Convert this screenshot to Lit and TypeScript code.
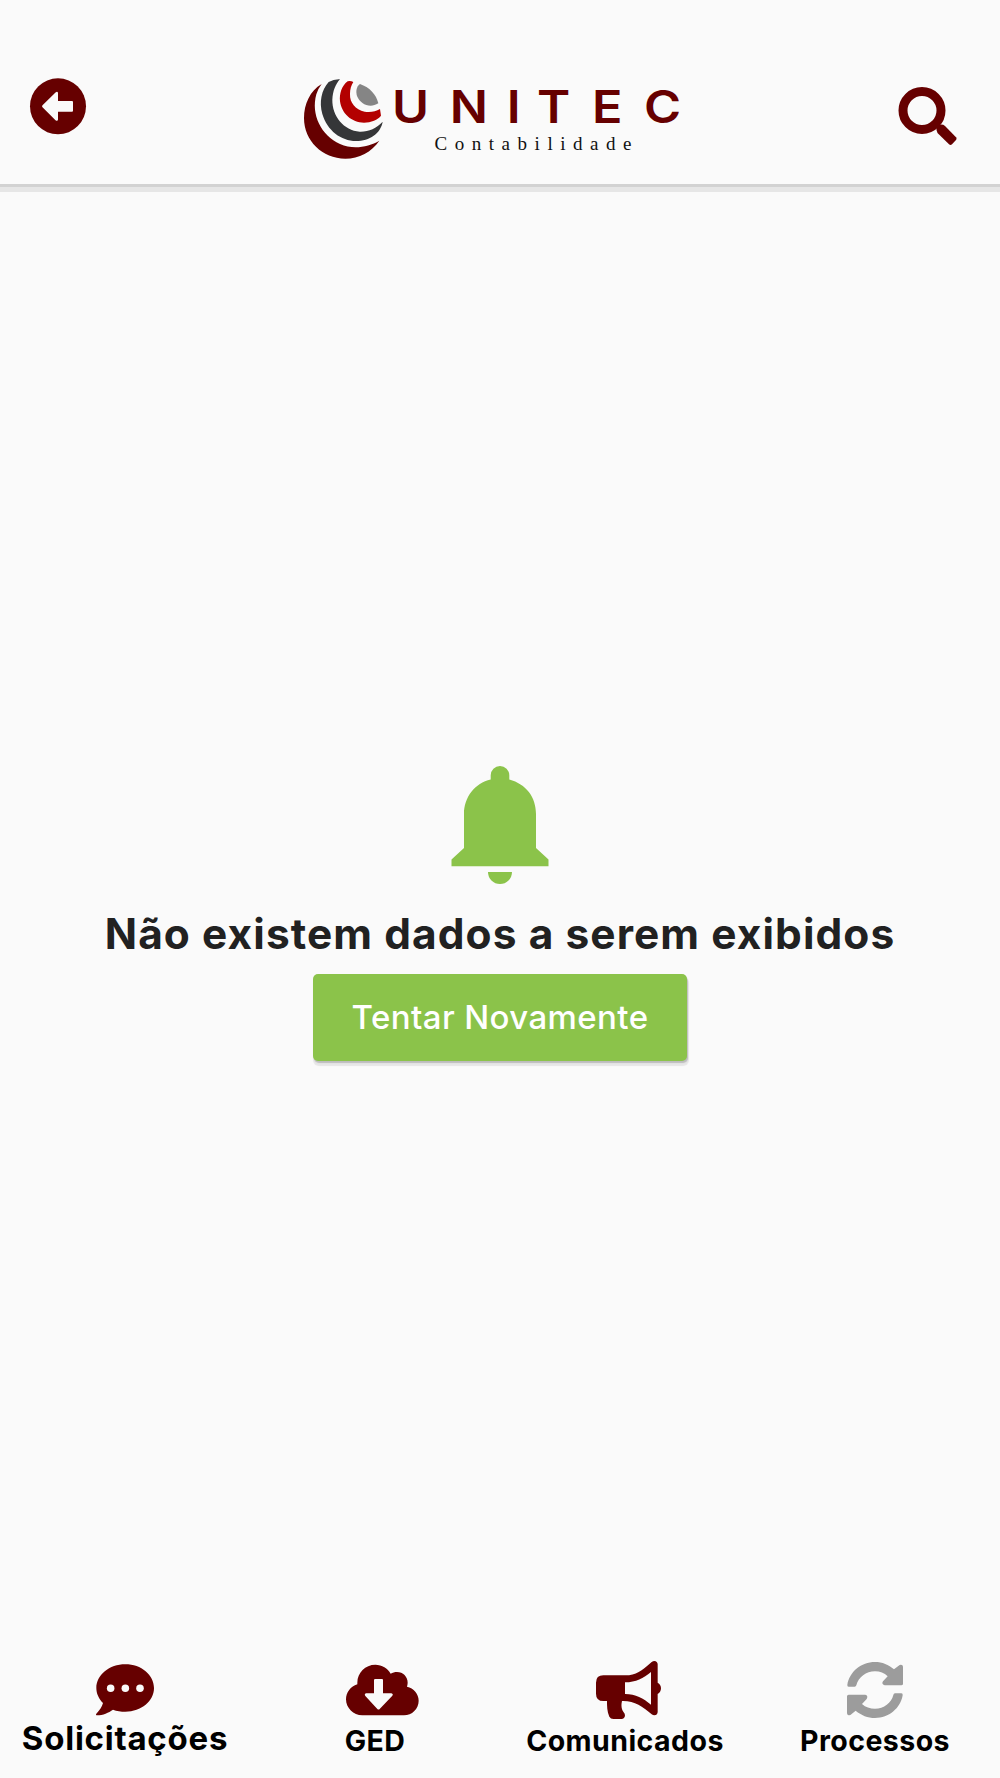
import { LitElement, html, css, svg } from "lit";
import { customElement } from "lit/decorators.js";

const chat = svg`
  <path fill="#600" fill-rule="evenodd" d="M376 73C424 73 462 105 462 144S424 215 376 215C363 215 350 213 339 209C326 218 309 226 291 226C288 226 287 223 289 221C299 211 306 200 309 189C297 177 289 161 289 144C289 105 328 73 376 73Z"/>
  <g fill="#fafafa"><circle cx="332" cy="145" r="11.3"/><circle cx="376" cy="145" r="11.3"/><circle cx="420" cy="145" r="11.3"/></g>`;

const cloud = svg`
  <path fill="#600" d="M187 226C160 226 138 204 138 178C138 157 152 139 172 133V128C172 98 196 74 226 74C246 74 263 85 272 101C278 98 284 96 291 96C309 96 323 110 323 128C323 132 322 136 321 140C341 144 356 162 356 182C356 206 336 226 312 226Z"/>
  <path fill="#fafafa" d="M226 117H246Q249 117 249 120V160H274Q281 162 277 167L239 207Q236 210 232 207L196 168Q192 162 198 160H222V120Q222 117 226 117Z"/>`;

const horn = svg`
  <path fill="#600" fill-rule="evenodd" d="M310 106H375C410 106 423 93 455 66C464 59 473 65 473 73V128C479 131 483 137 483 145S479 159 473 162V216C473 225 463 229 455 223C427 199 404 182 366 183C363 196 364 207 371 217C379 226 374 237 364 237H340Q332 237 328 230C321 215 321 198 321 183H310Q288 183 288 161V128Q288 106 310 106ZM375 127V162C407 162 430 175 453 194V96C430 114 408 127 375 127Z"/>`;

const sync = svg`
  <g fill="#9c9c9c">
    <path d="M236 140Q231 140 232 134C239 95 273 66 315 66C337 66 356 74 372 88L386 77Q390 73 396 75Q399 77 399 81V131Q399 136 394 136H344Q338 135 337 130Q337 127 339 124L353 109C343 99 330 94 315 94C288 94 266 111 259 136Q258 140 254 140Z"/>
    <path d="M394 160Q399 160 398 166C391 205 357 234 315 234C293 234 274 226 257 212L244 223Q240 227 234 225Q231 223 231 219V169Q231 164 236 164H286Q292 165 292 170Q292 173 290 177L276 192C287 202 300 206 315 206C342 206 364 189 370 165Q371 160 375 160Z"/>
  </g>`;

const items = [
  { label: "Solicitações", kind: "first", box: "0 60 750 180", icon: chat },
  { label: "GED", kind: "ged", box: "-150 60 750 180", icon: cloud },
  { label: "Comunicados", kind: "com", box: "0 60 750 180", icon: horn },
  { label: "Processos", kind: "proc", box: "-60 60 750 180", icon: sync },
];

@customElement("app-root")
export class AppRoot extends LitElement {
  static styles = css`
    :host {
      display: flex;
      flex-direction: column;
      height: 1778px;
      background: #fafafa;
      font-family: Inter, "Liberation Sans", sans-serif;
      color: #000;
    }
    svg { display: block; }
    header {
      display: flex;
      justify-content: space-between;
      align-items: flex-start;
      box-sizing: border-box;
      height: 184px;
      padding: 76px 42px 0 28px;
      flex: none;
      box-shadow: 0 3px 0 #d2d2d2, 0 8px 0 #e6e6e6;
    }
    .icon-button { border: 0; padding: 0; background: none; }
    .logo { margin-left: 4px; }
    .search { margin-top: 9px; }
    .brand { font: 600 45px Inter, sans-serif; fill: #600; }
    .sub { font: 19px "Liberation Serif", serif; fill: #111; }
    main {
      flex: 1;
      display: flex;
      flex-direction: column;
      align-items: center;
      padding-top: 582px;
    }
    h1 {
      margin: 24px 0 0;
      font-size: 42.4px;
      font-weight: 700;
      line-height: 50px;
      letter-spacing: 1.1px;
      color: #212121;
      white-space: nowrap;
    }
    .retry {
      margin-top: 14.5px;
      width: 374.5px;
      height: 87px;
      padding: 0;
      border: 0;
      border-radius: 5px;
      background: #8bc34a;
      color: #fff;
      font: 500 33px Inter, sans-serif;
      letter-spacing: 0.4px;
      white-space: nowrap;
      box-shadow: 1px 2px 1px rgba(0, 0, 0, 0.18), 1px 4px 1px 1px rgba(0, 0, 0, 0.08);
    }
    nav {
      display: grid;
      grid-template-columns: repeat(4, 1fr);
      height: 118px;
      flex: none;
    }
    .item {
      display: flex;
      flex-direction: column;
      align-items: center;
      font-size: 28.5px;
      font-weight: 700;
      line-height: 40px;
      letter-spacing: 0.45px;
      white-space: nowrap;
    }
    .label { margin-top: 1px; }
    .first .label { font-size: 33px; letter-spacing: 0.75px; margin-top: -2px; }
  `;

  render() {
    return html`
      <header>
        <button class="icon-button back" aria-label="Voltar">
          <svg width="60" height="60" viewBox="28 76 60 60">
            <circle cx="58" cy="106.3" r="28" fill="#600" />
            <path fill="#fafafa" d="M42.5 105.3 55.5 92.4Q57.700 91 58 93V101H72Q73 101 73 102V110.700Q73 111.700 72 111.700H58V119.600Q57.700 121.700 55.500 120.300L42.500 107.300Q41.500 106.300 42.500 105.300Z" />
          </svg>
        </button>
        <svg class="logo" width="390" height="84" viewBox="300 76 390 84">
          <g transform="translate(290 60) scale(.33333)">
            <path fill="#600" d="M95 72C60 92 42 133 42 174C42 242 97 296 166 296C207 296 245 276 268 242C235 261 190 270 150 252C94 227 62 164 79 103Q84 86 95 72Z" />
            <path fill="#353638" d="M150 58Q132 57 116 66C94 91 87 126 97 162C112 212 153 243 198 243C239 243 272 220 278 185C259 205 235 216 209 215C162 211 126 169 127 119C128 93 137 72 150 58Z" />
            <path fill="#b30000" d="M190 66Q182 62 173 64C155 78 148 100 150 124C155 161 185 188 222 188C243 188 264 179 273 167L270 147C257 155 240 158 224 155C196 149 179 128 180 102C180 87 184 75 190 66Z" />
            <path fill="#858585" d="M210 72C199 80 197 94 201 108C211 133 240 146 265 130C258 102 238 82 210 72Z" />
          </g>
          <text class="brand" transform="scale(1.12 1)" y="123.3" x="350 401.5 452.5 479.5 528.5 575">UNITEC</text>
          <text class="sub" x="434.5" y="149.5" textLength="197" lengthAdjust="spacing">Contabilidade</text>
        </svg>
        <button class="icon-button search" aria-label="Buscar">
          <svg width="60" height="62" viewBox="898 85 60 62">
            <circle cx="922" cy="110.5" r="19" fill="none" stroke="#600" stroke-width="9" />
            <path fill="#600" d="M936.5 126.5 938.5 125Q942.5 123.7 945 126L956 137.3Q957.2 138.7 956 140L952 144.3Q950.5 145.5 949 144.3L937.5 133Q936 130.5 936.5 126.5Z" />
          </svg>
        </button>
      </header>
      <main>
        <svg width="98" height="119" viewBox="21 16 98 119">
          <g fill="#8bc34a">
            <path d="M60.7 29.5V25.300A9.300 9.300 0 0 1 79.300 25.300V29.500C96 34 106 47 106 64V98L118.500 109.500V116.200H21.500V109.500L34 98V64C34 47 45 33 60.700 29.500Z" />
            <path d="M58 122H82A12 12 0 0 1 58 122Z" />
          </g>
        </svg>
        <h1>Não existem dados a serem exibidos</h1>
        <button class="retry">Tentar Novamente</button>
      </main>
      <nav>
        ${items.map(
          (i) => html`<div class="item ${i.kind}">
            <svg width="250" height="60" viewBox=${i.box}>${i.icon}</svg>
            <span class="label">${i.label}</span>
          </div>`
        )}
      </nav>
    `;
  }
}
